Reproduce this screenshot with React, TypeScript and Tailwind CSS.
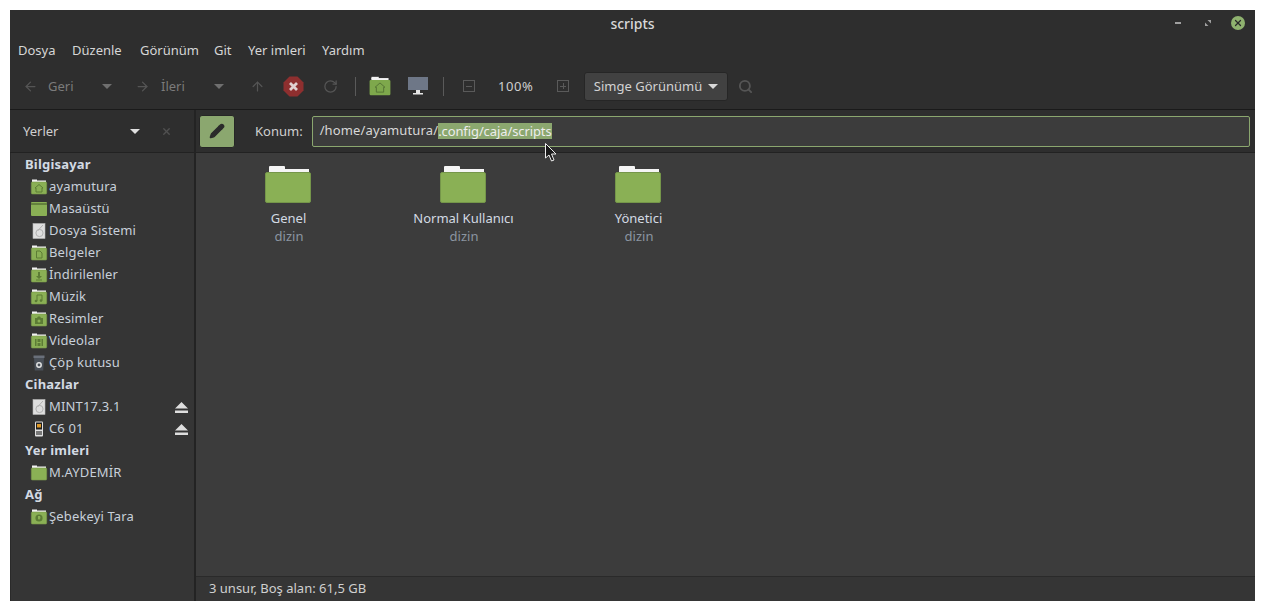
import { ReactNode } from "react";
import { ArrowLeft, ArrowRight, ArrowUp, RotateCw, Search, Pencil, X } from "lucide-react";

const SmallFolder = ({ children }: { children?: ReactNode }) => (
  <svg width="18" height="16" viewBox="0 0 18 16" className="shrink-0">
    <rect x="2" y="0.5" width="5" height="2" fill="#f2f2f2" />
    <rect x="2" y="1.5" width="14" height="2" fill="#f2f2f2" />
    <rect x="1.3" y="3" width="15.4" height="12" rx="1" fill="#8ab055" stroke="#78994a" strokeWidth="0.6" />
    {children}
  </svg>
);

const glyph = "#5c7c35";

const HomeFolder = () => (
  <SmallFolder>
    <path d="M9 5.5 L13 9 H12 V13 H6 V9 H5 Z" fill="none" stroke={glyph} strokeWidth="1" />
  </SmallFolder>
);
const DesktopFolder = () => (
  <svg width="18" height="16" viewBox="0 0 18 16" className="shrink-0">
    <rect x="1" y="1" width="16" height="14" rx="1" fill="#8ab055" />
    <rect x="1" y="2.5" width="16" height="1" fill="#3f5526" />
  </svg>
);
const DocFolder = () => (
  <SmallFolder>
    <path d="M6.5 6 H10 L12 8 V13 H6.5 Z" fill="none" stroke={glyph} strokeWidth="1" />
  </SmallFolder>
);
const DownloadFolder = () => (
  <SmallFolder>
    <path d="M8 5 H10 V9 H12 L9 12 L6 9 H8 Z M6 12.5 H12 V13.5 H6 Z" fill={glyph} />
  </SmallFolder>
);
const MusicFolder = () => (
  <SmallFolder>
    <path d="M7 12 V6 H12 V11.5" fill="none" stroke={glyph} strokeWidth="1" />
    <circle cx="6" cy="12" r="1.3" fill={glyph} />
    <circle cx="11" cy="11.6" r="1.3" fill={glyph} />
  </SmallFolder>
);
const PhotoFolder = () => (
  <SmallFolder>
    <path d="M5 7 H7 L8 5.5 H10 L11 7 H13 V13 H5 Z" fill={glyph} />
    <circle cx="9" cy="10" r="1.5" fill="#8ab055" />
  </SmallFolder>
);
const VideoFolder = () => (
  <SmallFolder>
    <rect x="5" y="6" width="8" height="7" fill={glyph} />
    <path d="M7 6 V13 M11 6 V13 M7 9.5 H11" stroke="#8ab055" strokeWidth="1" />
  </SmallFolder>
);
const NetworkFolder = () => (
  <SmallFolder>
    <circle cx="9" cy="9" r="3.6" fill={glyph} />
    <path d="M8 7 L10 7 L10.5 9 L9 11 L8 9.5 Z" fill="#8ab055" />
  </SmallFolder>
);
const PlainFolder = () => <SmallFolder />;

const Drive = () => (
  <svg width="18" height="16" viewBox="0 0 18 16" className="shrink-0">
    <rect x="3" y="0.5" width="12" height="15" fill="#dedede" stroke="#b4b4b4" strokeWidth="0.6" />
    <circle cx="9.5" cy="10" r="3.6" fill="none" stroke="#b0b0b0" strokeWidth="1" />
    <path d="M13 2 L7.5 8" stroke="#b0b0b0" strokeWidth="1" />
  </svg>
);
const Trash = () => (
  <svg width="18" height="16" viewBox="0 0 18 16" className="shrink-0">
    <path d="M4 2.5 H14 L13.2 15.5 H4.8 Z" fill="#4a5058" />
    <rect x="3.5" y="0.5" width="11" height="2.5" fill="#6a707a" />
    <circle cx="9" cy="10" r="2.2" fill="none" stroke="#e4e4e4" strokeWidth="1.5" />
  </svg>
);
const Phone = () => (
  <svg width="18" height="16" viewBox="0 0 18 16" className="shrink-0">
    <rect x="5" y="0.5" width="8" height="15" rx="1" fill="#e0e0e0" />
    <rect x="6" y="1.5" width="6" height="7" fill="#202020" />
    <rect x="7" y="3" width="4" height="3.5" fill="#e09a28" />
    <rect x="6" y="10" width="6" height="4" fill="#777" />
  </svg>
);
const Eject = () => (
  <svg width="13" height="11" viewBox="0 0 13 11">
    <path d="M6.5 0 L13 6.5 H0 Z M0 8.5 H13 V11 H0 Z" fill="#dedede" />
  </svg>
);
const Caret = ({ color = "#6f6f6f" }: { color?: string }) => (
  <svg width="10" height="5" viewBox="0 0 10 5" className="shrink-0">
    <path d="M0 0 H10 L5 5 Z" fill={color} />
  </svg>
);

const places = [
  { type: "head", label: "Bilgisayar" },
  { icon: <HomeFolder />, label: "ayamutura" },
  { icon: <DesktopFolder />, label: "Masaüstü" },
  { icon: <Drive />, label: "Dosya Sistemi" },
  { icon: <DocFolder />, label: "Belgeler" },
  { icon: <DownloadFolder />, label: "İndirilenler" },
  { icon: <MusicFolder />, label: "Müzik" },
  { icon: <PhotoFolder />, label: "Resimler" },
  { icon: <VideoFolder />, label: "Videolar" },
  { icon: <Trash />, label: "Çöp kutusu" },
  { type: "head", label: "Cihazlar" },
  { icon: <Drive />, label: "MINT17.3.1", eject: true },
  { icon: <Phone />, label: "C6 01", eject: true },
  { type: "head", label: "Yer imleri" },
  { icon: <PlainFolder />, label: "M.AYDEMİR" },
  { type: "head", label: "Ağ" },
  { icon: <NetworkFolder />, label: "Şebekeyi Tara" },
];

const menus = [
  { label: "Dosya", width: "w-[54px]" },
  { label: "Düzenle", width: "w-[68px]" },
  { label: "Görünüm", width: "w-[74px]" },
  { label: "Git", width: "w-[34px]" },
  { label: "Yer imleri", width: "w-[74px]" },
  { label: "Yardım", width: "w-[60px]" },
];

const BigFolder = ({ name }: { name: string }) => (
  <div className="w-[175px] flex flex-col items-center">
    <svg width="48" height="38" viewBox="0 0 48 38">
      <rect x="5" y="0" width="16" height="5" rx="1" fill="#f5f5f5" />
      <rect x="5" y="3" width="40" height="4" fill="#f5f5f5" />
      <rect x="1.5" y="6.5" width="45" height="30" rx="1.5" fill="#8ab055" stroke="#75964a" />
    </svg>
    <span className="mt-[5px] pl-[2px] leading-[18px] text-[#d3dae3]">{name}</span>
    <span className="pl-[3px] leading-[18px] text-[#8b95a1]">dizin</span>
  </div>
);

export default function App() {
  return (
    <div className="h-[611px] w-[1265px] bg-white pl-[10px] pr-[10px] pt-[10px] pb-[10px] font-['Noto_Sans',sans-serif] text-[13px] overflow-hidden">
      <div className="relative flex h-[591px] w-[1245px] flex-col bg-[#2e2e2e] text-[#d3d3d3]">
        {/* title bar */}
        <div className="relative flex h-[28px] shrink-0 items-center justify-center pb-[2px]">
          <span className="text-[14px] font-medium text-[#d8d8d8]">scripts</span>
          <div className="absolute right-[10px] top-[6px] flex items-center">
            <div className="mr-[24px] h-[2px] w-[6px] bg-[#a0a0a0]" />
            <svg width="6" height="6" viewBox="0 0 6 6" className="mr-[20px]">
              <path d="M0 6 V2.5 L3.5 6 Z M6 0 V3.5 L2.5 0 Z" fill="#a0a0a0" />
            </svg>
            <div className="flex h-[14px] w-[14px] items-center justify-center rounded-full bg-[#8fb26f]">
              <X size={10} strokeWidth={3} color="#2a2a2a" />
            </div>
          </div>
        </div>

        {/* menu bar */}
        <div className="flex h-[25px] shrink-0 items-center pl-[8px] text-[#d6d6d6]">
          {menus.map((m) => (
            <span key={m.label} className={m.width}>
              {m.label}
            </span>
          ))}
        </div>

        {/* toolbar */}
        <div className="flex h-[47px] shrink-0 items-center border-b border-[#1a1a1a] text-[#7b7b7b]">
          <ArrowLeft size={15} color="#555" className="ml-[13px]" />
          <span className="ml-[10px] w-[54px] pt-[2px]">Geri</span>
          <Caret />
          <ArrowRight size={15} color="#555" className="ml-[23px]" />
          <span className="ml-[11px] w-[53px] pt-[2px]">İleri</span>
          <Caret />
          <ArrowUp size={15} color="#555" className="ml-[26px]" />
          <svg width="21" height="21" viewBox="0 0 21 21" className="ml-[18px]">
            <path d="M6.5 0.5 H14.5 L20.5 6.5 V14.5 L14.5 20.5 H6.5 L0.5 14.5 V6.5 Z" fill="#8e2f2f" />
            <path d="M7 7 L14 14 M14 7 L7 14" stroke="#e0cfcf" strokeWidth="2.8" />
          </svg>
          <RotateCw size={15} color="#555" className="ml-[19px]" />
          <div className="ml-[17px] h-[19px] w-px bg-[#5a5a5a]" />
          <div className="ml-[13px] flex">
            <ToolbarFolder />
          </div>
          <svg width="22" height="20" viewBox="0 0 22 20" className="ml-[16px]">
            <rect x="1" y="1" width="20" height="13" fill="#6e7787" />
            <rect x="9" y="14" width="4" height="3" fill="#e6e6e6" />
            <rect x="6" y="17" width="10" height="1.5" fill="#e6e6e6" />
          </svg>
          <div className="ml-[14px] h-[19px] w-px bg-[#5a5a5a]" />
          <div className="ml-[19px] flex h-[12px] w-[12px] items-center justify-center border border-[#5a5a5a]">
            <div className="h-px w-[6px] bg-[#5a5a5a]" />
          </div>
          <span className="ml-[23px] w-[36px] pt-[2px] tracking-[0.6px] text-[#cfcfcf]">100%</span>
          <div className="relative ml-[23px] flex h-[12px] w-[12px] items-center justify-center border border-[#5a5a5a]">
            <div className="h-px w-[6px] bg-[#5a5a5a]" />
            <div className="absolute h-[6px] w-px bg-[#5a5a5a]" />
          </div>
          <div className="ml-[15px] flex h-[29px] w-[144px] items-center justify-center gap-[6px] rounded-[3px] border border-[#262626] bg-[#414141] text-[#d3d3d3]">
            <span className="pt-[2px]">Simge Görünümü</span>
            <Caret color="#d8d8d8" />
          </div>
          <Search size={15} color="#555" strokeWidth={3} className="ml-[10px]" />
        </div>

        <div className="flex min-h-0 flex-1">
          {/* sidebar */}
          <div className="flex w-[184px] shrink-0 flex-col">
            <div className="flex h-[43px] shrink-0 items-center border-b border-[#222] pl-[13px] text-[#d0d0d0]">
              <span className="w-[107px] pt-[2px]">Yerler</span>
              <Caret color="#e0e0e0" />
              <X size={11} color="#505050" strokeWidth={3} className="ml-[21px]" />
            </div>
            <div className="flex flex-1 flex-col border-l border-[#2a2a2a] bg-[#353535] pl-[14px] pr-[6px] pt-px">
              {places.map((p) =>
                p.type === "head" ? (
                  <div key={p.label} className="flex h-[22px] items-center font-bold tracking-[0.2px] text-[#d3dae3]">
                    {p.label}
                  </div>
                ) : (
                  <div key={p.label} className="flex h-[22px] items-center pl-[5px] text-[#c8d0da]">
                    {p.icon}
                    <span className="ml-px flex-1 tracking-[0.15px]">{p.label}</span>
                    {p.eject && <Eject />}
                  </div>
                ),
              )}
            </div>
          </div>
          <div className="w-[2px] shrink-0 bg-[#232323]" />

          {/* main */}
          <div className="flex min-w-0 flex-1 flex-col">
            <div className="flex h-[43px] shrink-0 items-center border-b border-[#222] pl-[3px] pr-[5px]">
              <div className="flex h-[33px] w-[36px] items-center justify-center rounded-[3px] border border-[#262626] bg-[#8ba76f]">
                <Pencil size={16} fill="#2b2b2b" color="#2b2b2b" />
              </div>
              <span className="ml-[20px] pt-[2px] text-[#d0d0d0]">Konum:</span>
              <div className="ml-[9px] flex h-[31px] flex-1 items-center rounded-[2px] border border-[#8ba76f] bg-[#3c3c3c] pl-[7px] text-[#d8d8d8]">
                <span className="tracking-[0.13px]">/home/ayamutura/</span>
                <span className="bg-[#8ba76f] leading-[16px] tracking-[-0.1px] text-[#ededed]">.config/caja/scripts</span>
              </div>
            </div>
            <div className="flex flex-1 items-start bg-[#3c3c3c] pl-[4px] pt-[13px]">
              <BigFolder name="Genel" />
              <BigFolder name="Normal Kullanıcı" />
              <BigFolder name="Yönetici" />
            </div>
            <div className="flex h-[25px] shrink-0 items-center border-t border-[#2a2a2a] bg-[#353535] pl-[13px] text-[#d0d0d0]">
              3 unsur, Boş alan: 61,5 GB
            </div>
          </div>
        </div>

        {/* mouse pointer */}
        <svg width="13" height="20" viewBox="0 0 13 20" className="absolute left-[535px] top-[133px]">
          <path d="M0.5 0.5 V15 L4 12 L6.5 18 L9 17 L6.5 11 H11 Z" fill="#1a1a1a" stroke="#eeeeee" strokeWidth="1" />
        </svg>
      </div>
    </div>
  );
}

function ToolbarFolder() {
  return (
    <svg width="22" height="20" viewBox="0 0 18 16">
      <rect x="2" y="0.5" width="6" height="2" fill="#f2f2f2" />
      <rect x="2" y="1.5" width="14" height="2" fill="#f2f2f2" />
      <rect x="0.5" y="3" width="17" height="12.5" rx="1" fill="#7ea84c" />
      <path d="M9 5.5 L13 9 H12 V13 H6 V9 H5 Z" fill="#7ea84c" stroke="#557535" strokeWidth="0.8" />
    </svg>
  );
}
